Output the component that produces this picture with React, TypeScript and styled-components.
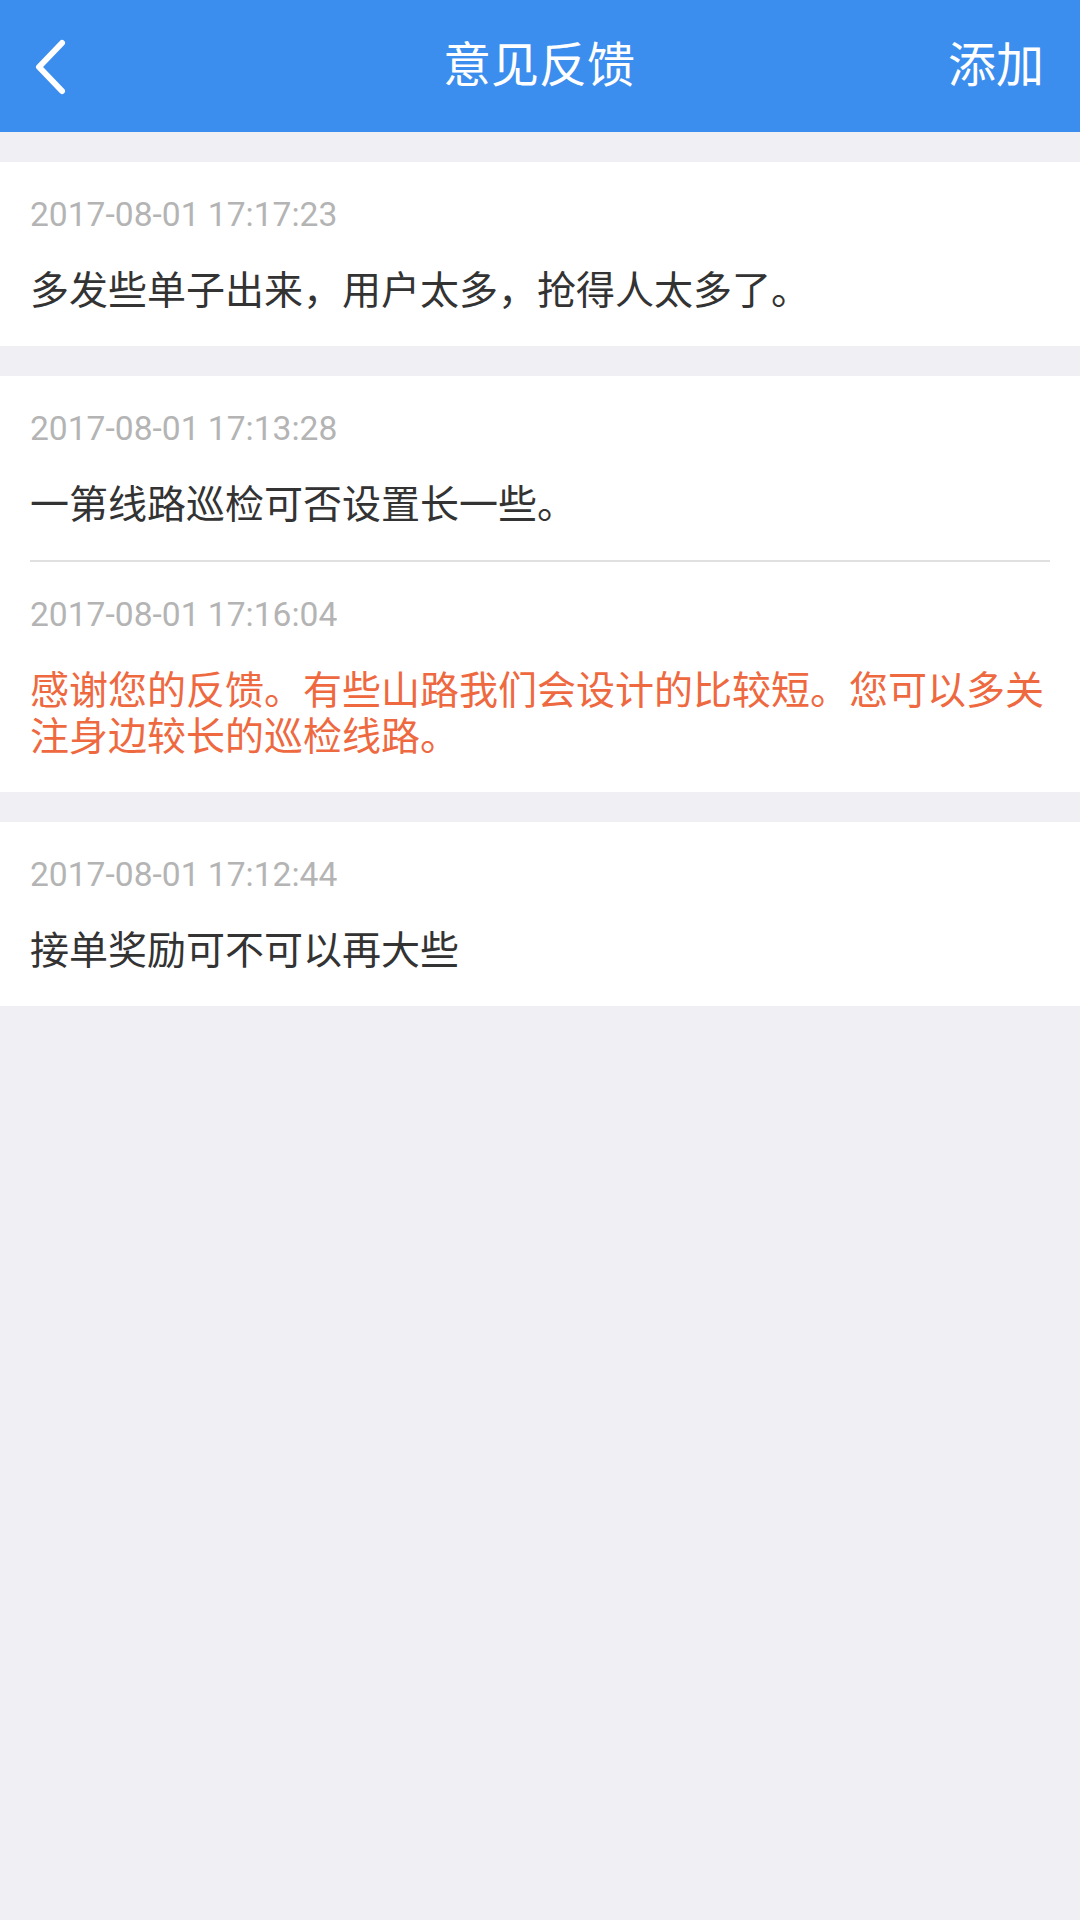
import React, { FC } from 'react'
import styled, { createGlobalStyle } from 'styled-components'

const GlobalStyle = createGlobalStyle`
  html, body {
    margin: 0;
    padding: 0;
    background: #efeff4;
  }
  body {
    font-family: Roboto, "Noto Sans CJK SC", sans-serif;
    -webkit-font-smoothing: antialiased;
  }
  #root {
    min-height: 100vh;
  }
`

const Page = styled.div`
  display: flex;
  flex-direction: column;
  min-height: 100vh;
  background: #efeff4;
`

const TopBar = styled.header`
  display: grid;
  grid-template-columns: 1fr auto 1fr;
  align-items: center;
  height: 132px;
  padding: 0 36px 0 34px;
  background: #3b8dee;
  color: #ffffff;
  box-sizing: border-box;
`

const BackButton = styled.button`
  justify-self: start;
  display: flex;
  align-items: center;
  padding: 0;
  border: none;
  background: none;
  color: #ffffff;
  cursor: pointer;
`

const Title = styled.h1`
  margin: 0;
  font-size: 48px;
  font-weight: 400;
  line-height: 1;
`

const AddButton = styled.span`
  justify-self: end;
  font-size: 48px;
  line-height: 1;
`

const List = styled.div`
  display: flex;
  flex-direction: column;
  gap: 30px;
  padding-top: 30px;
`

const Card = styled.section`
  display: flex;
  flex-direction: column;
  background: #ffffff;
`

const Entry = styled.div`
  display: flex;
  flex-direction: column;
  padding: 31px 30px 32px;
`

const Divider = styled.div`
  height: 2px;
  margin: 0 30px;
  background: #e0e0e0;
`

const Time = styled.div`
  font-size: 33.6px;
  line-height: 44px;
  color: #b4b4b4;
`

const Content = styled.div<{ $reply?: boolean }>`
  margin-top: 31px;
  font-size: 39px;
  line-height: 46px;
  color: ${p => (p.$reply ? '#ee6840' : '#333333')};
`

interface Message {
  time: string
  text: string
  reply?: boolean
}

const feedback: Message[][] = [
  [{ time: '2017-08-01 17:17:23', text: '多发些单子出来，用户太多，抢得人太多了。' }],
  [
    { time: '2017-08-01 17:13:28', text: '一第线路巡检可否设置长一些。' },
    {
      time: '2017-08-01 17:16:04',
      text: '感谢您的反馈。有些山路我们会设计的比较短。您可以多关注身边较长的巡检线路。',
      reply: true,
    },
  ],
  [{ time: '2017-08-01 17:12:44', text: '接单奖励可不可以再大些' }],
]

const BackIcon: FC = () => (
  <svg width="40" height="60" viewBox="0 0 40 60" fill="none">
    <path d="M28 7 L5 31 L28 55" stroke="currentColor" strokeWidth="6" strokeLinecap="round" strokeLinejoin="round" />
  </svg>
)

const App: FC = () => {
  return (
    <Page>
      <GlobalStyle />
      <TopBar>
        <BackButton aria-label="返回">
          <BackIcon />
        </BackButton>
        <Title>意见反馈</Title>
        <AddButton>添加</AddButton>
      </TopBar>

      <List>
        {feedback.map((thread, i) => (
          <Card key={i}>
            {thread.map((msg, j) => (
              <React.Fragment key={j}>
                {j > 0 && <Divider />}
                <Entry>
                  <Time>{msg.time}</Time>
                  <Content $reply={msg.reply}>{msg.text}</Content>
                </Entry>
              </React.Fragment>
            ))}
          </Card>
        ))}
      </List>
    </Page>
  )
}

export default App
